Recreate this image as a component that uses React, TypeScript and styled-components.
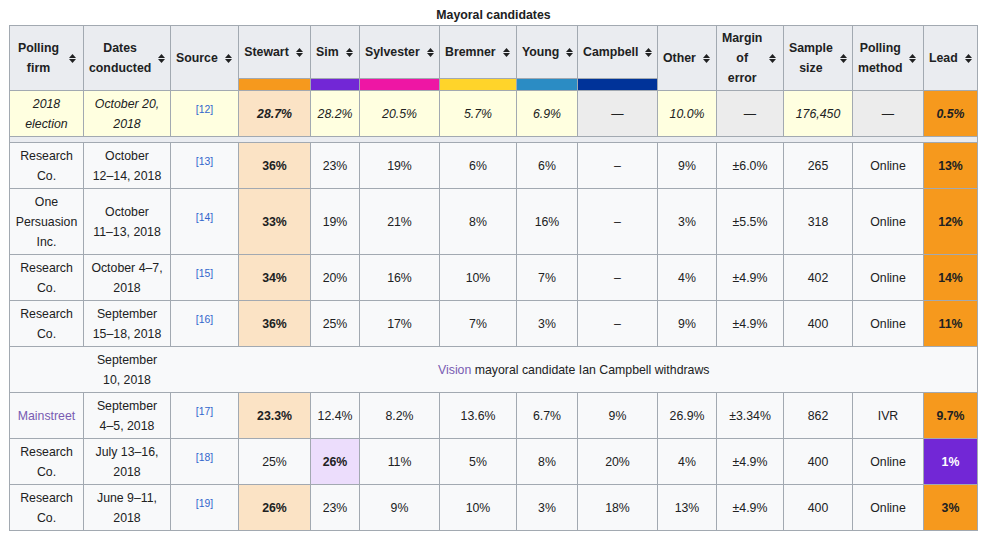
import React from 'react';
import styled, { createGlobalStyle } from 'styled-components';

const GlobalStyle = createGlobalStyle`
  body {
    margin: 0;
    background: #ffffff;
    font-family: "Liberation Sans", Arial, sans-serif;
    color: #202122;
  }
`

const Page = styled.div`
  padding: 5px 0 0 9px;
`

const Table = styled.table`
  border-collapse: collapse;
  table-layout: fixed;
  width: 969px;
  font-size: 12.32px;
  line-height: 20px;
  background: #f8f9fa;
  border: 1px solid #a2a9b1;
  color: #202122;
  text-align: center;
`

const Caption = styled.caption`
  font-weight: bold;
  line-height: 20px;
`

const HeadCell = styled.th`
  background: #eaecf0;
  border: 1px solid #a2a9b1;
  padding: 2px 7px 2px 5px;
  vertical-align: middle;
  font-weight: bold;
`

const HeadInner = styled.div`
  display: flex;
  align-items: center;
`

const HeadLabel = styled.span`
  flex: 1;
  text-align: center;
`

const SortIcon = styled.svg`
  flex-shrink: 0;
  width: 7px;
  height: 9px;
  margin-left: 7px;
`

const ColorBar = styled.th<{ $color: string }>`
  height: 11px;
  padding: 0;
  border: 1px solid #a2a9b1;
  background: ${p => p.$color};
`

const Row = styled.tr<{ $italic?: boolean }>`
  font-style: ${p => (p.$italic ? 'italic' : 'normal')};
`

const Cell = styled.td<{ $bg?: string; $bold?: boolean; $color?: string }>`
  border: 1px solid #a2a9b1;
  padding: 3px 5px 2px;
  vertical-align: middle;
  background: ${p => p.$bg || 'transparent'};
  font-weight: ${p => (p.$bold ? 'bold' : 'normal')};
  color: ${p => p.$color || '#202122'};
`

const NoWrap = styled.span`
  white-space: nowrap;
`

const SpacerCell = styled.td`
  height: 5px;
  padding: 0;
  background: #eaecf0;
  border: 1px solid #a2a9b1;
`

const EventCell = styled.td`
  border-top: 1px solid #a2a9b1;
  border-bottom: 1px solid #a2a9b1;
  padding: 3px 5px 2px;
  vertical-align: middle;
`

const Ref = styled.sup`
  font-size: 10.4px;
  line-height: 1;
  vertical-align: super;
  color: #3366cc;
  font-style: normal;
`

const Visited = styled.span`
  color: #795cb2;
`

const colors = {
  orange: '#f6991d',
  purple: '#7227d6',
  magenta: '#ee16a4',
  yellow: '#ffd42a',
  blue: '#2b8cc4',
  navy: '#003399',
  peach: '#fbe3c5',
  lavender: '#ecddfc',
  pale: '#ffffe0',
  na: '#ececec',
}

const widths = [74, 87, 68, 72, 49, 80, 77, 61, 80, 59, 67, 69, 71, 54];

const Sort = () => (
  <SortIcon viewBox="0 0 7 9">
    <path d="M3.5 0 L7 4 L0 4 Z M0 5 L7 5 L3.5 9 Z" fill="#202122" />
  </SortIcon>
);

const Head: React.FC<{ label: React.ReactNode; rowSpan?: number }> = ({ label, rowSpan }) => (
  <HeadCell rowSpan={rowSpan}>
    <HeadInner>
      <HeadLabel>{label}</HeadLabel>
      <Sort />
    </HeadInner>
  </HeadCell>
);

const candidates = [
  { name: 'Stewart', color: colors.orange },
  { name: 'Sim', color: colors.purple },
  { name: 'Sylvester', color: colors.magenta },
  { name: 'Bremner', color: colors.yellow },
  { name: 'Young', color: colors.blue },
  { name: 'Campbell', color: colors.navy },
];

interface Poll {
  firm: React.ReactNode;
  month: string;
  days: string;
  ref: number;
  values: string[];
  lead: number; // index of leading candidate
  other: string;
  margin: string;
  sample: string;
  method: string;
  leadValue: string;
}

const polls: Poll[] = [
  { firm: 'Research Co.', month: 'October', days: '12–14,', ref: 13, values: ['36%', '23%', '19%', '6%', '6%', '–'], lead: 0, other: '9%', margin: '±6.0%', sample: '265', method: 'Online', leadValue: '13%' },
  { firm: 'One Persuasion Inc.', month: 'October', days: '11–13,', ref: 14, values: ['33%', '19%', '21%', '8%', '16%', '–'], lead: 0, other: '3%', margin: '±5.5%', sample: '318', method: 'Online', leadValue: '12%' },
  { firm: 'Research Co.', month: 'October', days: '4–7,', ref: 15, values: ['34%', '20%', '16%', '10%', '7%', '–'], lead: 0, other: '4%', margin: '±4.9%', sample: '402', method: 'Online', leadValue: '14%' },
  { firm: 'Research Co.', month: 'September', days: '15–18,', ref: 16, values: ['36%', '25%', '17%', '7%', '3%', '–'], lead: 0, other: '9%', margin: '±4.9%', sample: '400', method: 'Online', leadValue: '11%' },
];

const laterPolls: Poll[] = [
  { firm: <Visited>Mainstreet</Visited>, month: 'September', days: '4–5,', ref: 17, values: ['23.3%', '12.4%', '8.2%', '13.6%', '6.7%', '9%'], lead: 0, other: '26.9%', margin: '±3.34%', sample: '862', method: 'IVR', leadValue: '9.7%' },
  { firm: 'Research Co.', month: 'July', days: '13–16,', ref: 18, values: ['25%', '26%', '11%', '5%', '8%', '20%'], lead: 1, other: '4%', margin: '±4.9%', sample: '400', method: 'Online', leadValue: '1%' },
  { firm: 'Research Co.', month: 'June', days: '9–11,', ref: 19, values: ['26%', '23%', '9%', '10%', '3%', '18%'], lead: 0, other: '13%', margin: '±4.9%', sample: '400', method: 'Online', leadValue: '3%' },
];

const highlight = [colors.peach, colors.lavender];
const leadBg = [colors.orange, colors.purple];

const PollRow: React.FC<{ poll: Poll }> = ({ poll }) => (
  <Row>
    <Cell>{poll.firm}</Cell>
    <Cell>
      {poll.month} <NoWrap>{poll.days}</NoWrap> 2018
    </Cell>
    <Cell><Ref>[{poll.ref}]</Ref></Cell>
    {poll.values.map((v, i) => (
      <Cell key={i} $bg={i === poll.lead ? highlight[poll.lead] : undefined} $bold={i === poll.lead}>
        {v}
      </Cell>
    ))}
    <Cell>{poll.other}</Cell>
    <Cell>{poll.margin}</Cell>
    <Cell>{poll.sample}</Cell>
    <Cell>{poll.method}</Cell>
    <Cell $bg={leadBg[poll.lead]} $bold $color={poll.lead === 1 ? '#ffffff' : '#202122'}>
      {poll.leadValue}
    </Cell>
  </Row>
);

export default function App() {
  return (
    <Page>
      <GlobalStyle />
      <Table>
        <Caption>Mayoral candidates</Caption>
        <colgroup>
          {widths.map((w, i) => <col key={i} style={{ width: w }} />)}
        </colgroup>
        <thead>
          <tr>
            <Head label="Polling firm" rowSpan={2} />
            <Head label="Dates conducted" rowSpan={2} />
            <Head label="Source" rowSpan={2} />
            {candidates.map(c => <Head key={c.name} label={c.name} />)}
            <Head label="Other" rowSpan={2} />
            <Head label="Margin of error" rowSpan={2} />
            <Head label="Sample size" rowSpan={2} />
            <Head label="Polling method" rowSpan={2} />
            <Head label="Lead" rowSpan={2} />
          </tr>
          <tr>
            {candidates.map(c => <ColorBar key={c.name} $color={c.color} />)}
          </tr>
        </thead>
        <tbody>
          <Row $italic>
            <Cell $bg={colors.pale}>2018 election</Cell>
            <Cell $bg={colors.pale}>October 20, 2018</Cell>
            <Cell $bg={colors.pale}><Ref>[12]</Ref></Cell>
            <Cell $bg={colors.peach} $bold>28.7%</Cell>
            <Cell $bg={colors.pale}>28.2%</Cell>
            <Cell $bg={colors.pale}>20.5%</Cell>
            <Cell $bg={colors.pale}>5.7%</Cell>
            <Cell $bg={colors.pale}>6.9%</Cell>
            <Cell $bg={colors.na}>—</Cell>
            <Cell $bg={colors.pale}>10.0%</Cell>
            <Cell $bg={colors.na}>—</Cell>
            <Cell $bg={colors.pale}>176,450</Cell>
            <Cell $bg={colors.na}>—</Cell>
            <Cell $bg={colors.orange} $bold>0.5%</Cell>
          </Row>
          <tr>
            <SpacerCell colSpan={14} />
          </tr>
          {polls.map(p => <PollRow key={p.ref} poll={p} />)}
          <tr>
            <EventCell />
            <EventCell>September 10, 2018</EventCell>
            <EventCell colSpan={12}>
              <Visited>Vision</Visited> mayoral candidate Ian Campbell withdraws
            </EventCell>
          </tr>
          {laterPolls.map(p => <PollRow key={p.ref} poll={p} />)}
        </tbody>
      </Table>
    </Page>
  );
}
